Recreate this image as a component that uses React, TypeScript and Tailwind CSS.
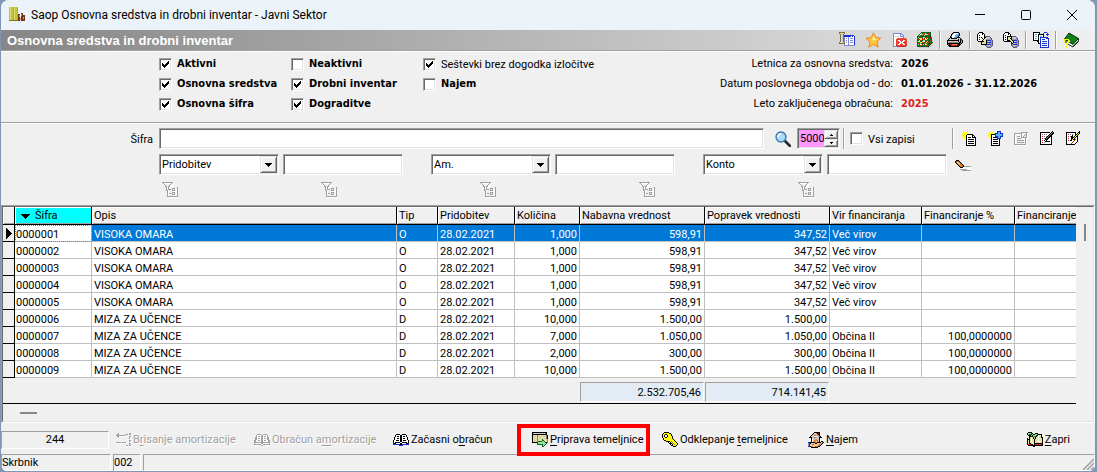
import type { ReactNode } from "react";
import clsx from "clsx";

const sunken =
  "border border-t-[#a0a0a0] border-l-[#a0a0a0] border-r-white border-b-white shadow-[inset_1px_1px_0_#696969,inset_-1px_-1px_0_#e3e3e3]";
const raised =
  "bg-[#f0f0f0] border border-t-[#e3e3e3] border-l-[#e3e3e3] border-r-[#696969] border-b-[#696969] shadow-[inset_1px_1px_0_#fff,inset_-1px_-1px_0_#a0a0a0]";
const panel = "border border-t-[#a0a0a0] border-l-[#a0a0a0] border-r-white border-b-white";
const boldText = "font-['DejaVu_Sans_Condensed','Noto_Sans',sans-serif] font-bold";

const palette: Record<string, string> = {
  k: "#000000",
  w: "#ffffff",
  g: "#808080",
  a: "#a0a0a0",
  l: "#c8c8c8",
  y: "#ffff00",
  c: "#e8e0a0",
  o: "#f08020",
  n: "#b07030",
  s: "#f4c890",
  r: "#d02020",
  R: "#e84030",
  b: "#1830d0",
  v: "#8088d8",
  p: "#9494bc",
  q: "#585870",
  t: "#58b8e8",
  d: "#086818",
  e: "#108010",
  m: "#90e0a0",
  f: "#7e7040",
};

const Bitmap = ({ rows }: { rows: string[] }) => (
  <svg
    className="h-4 w-4 shrink-0"
    viewBox="0 0 16 16"
    shapeRendering="crispEdges"
    aria-hidden="true"
  >
    {rows.map((row, y) =>
      [...row].map((ch, x) =>
        palette[ch] ? (
          <rect key={`${x}-${y}`} x={x} y={y} width="1" height="1" fill={palette[ch]} />
        ) : null
      )
    )}
  </svg>
);

const Drawing = ({ children }: { children: ReactNode }) => (
  <svg className="h-4 w-4 shrink-0" viewBox="0 0 16 16" fill="none" aria-hidden="true">
    {children}
  </svg>
);

const bitmaps = {
  panelWindow: [
    "ffffff..........",
    "fccclf..........",
    ".fclf...........",
    ".fclfbbbbbbbbbb.",
    ".fclfbbbbbbbwbwb",
    ".fclfvwwwvwwwwwb",
    ".fclfvwvwvwvvvwb",
    ".fclfvwwwvwwwwwb",
    ".fclfvwvwvwvvvwb",
    ".fclfvwwwvwwwwwb",
    "fccclfwvwvwvvvwb",
    "ffffffwwwvwwwwwb",
    ".....vwwwvwwwwwb",
    ".....vvvvvvvvvvv",
  ],
  closeDoc: [
    "................",
    "..vvvvvvvvv.....",
    "..vwwwwwwvlv....",
    "..vwwwwwwvwlv...",
    "..vwllllwvvvv...",
    "..vwwwwwwwwwv...",
    "..vwwwRRRRRRRRR.",
    "..vwwRRRRRRRRRRR",
    "..vwwRRwwRRRwwRR",
    "..vwwRRRwwRwwRRR",
    "..vwwRRRRwwwRRRR",
    "..vwwRRRwwRwwRRR",
    "..vwwRRwwRRRwwRR",
    "..vwwrRRRRRRRRRr",
    "..vvvvrrrrrrrrr.",
  ],
  cube: [
    "....dddddddddd..",
    "...dmerrmeerrd..",
    "..dwmmrrwmmrdd..",
    ".dmeerrmeerdrd..",
    "ddddddddddddek..",
    "dmdrrdcmdrrddrd.",
    "dewcmrcdwrcdrdd.",
    "drryyrrryyrdedd.",
    "demrddmmrdeddrdl",
    "dcwdrmcwdrmdredl",
    "dedyyrreeyrrdeddl",
    "drrmddrrmdedkrdl",
    "dmdwcrmdwcrdrdll",
    "deerredeerrddll.",
    "dddddddddddkll..",
    "..lllllllllll...",
  ],
  printer: [
    "......kkkkkk....",
    ".....kvwwwwvk...",
    "....kvwwwtttk...",
    "....kwwwtttvk...",
    "...kvwwwttvk....",
    "...kkwwttvkkk...",
    "..klkkkkkklllk..",
    ".klllllllllklkk.",
    "kkkkkkkkkkkklkgk",
    "klllllllllyklkgk",
    "klggggggggglkkgk",
    "kkkkkkkkkkkkkgk.",
    "kgkrrooooorkkk..",
    ".kkkrrrrrrkkk...",
    "..kkkkkkkkkk....",
  ],
  importDb: [
    "..kkkk..........",
    ".kwwwkk.........",
    "kwwwwkwk........",
    "kwkwwwwk........",
    "kwwwwwwkqqqqq...",
    "kwkwkwwkkllllq..",
    "kwwwwkwkcllllpq.",
    "kwkwwckccpppppq.",
    "kwwwwkccckbbbbpq",
    ".kkkkkkccklllppq",
    "....kcccckbbbbpq",
    "....kcccckllpppq",
    "....kkkkkkbbbbpq",
    "........qplllppq",
    ".........qppppq.",
    "..........qqqq..",
  ],
  exportDb: [
    "..kkkk..........",
    ".kwwwkk.........",
    "kwwwwkwk........",
    "kwkwwwwk........",
    "kwwwkkkkkqqqq...",
    "kwkwkccckllllq..",
    "kwwwkcckkllllpq.",
    "kwkwkccckpppppq.",
    "kwwwkkkcckbbbbpq",
    ".kkkkkkkcckllppq",
    "........kckbbbpq",
    "........kkllpppq",
    "........qpbbbbpq",
    "........qplllppq",
    ".........qppppq.",
    "..........qqqq..",
  ],
  copyDocs: [
    "kkkkkkk....bbb..",
    "kwwwwwk...b...b.",
    "kwttwkkkkkk..bbb",
    "kwwwwkwwwwk...b.",
    "kwttwkwttwk.....",
    "kwwwwkwbbbbbbbb.",
    "kwttwkwbwwwwwbbb",
    "kwwwwkwbwbbbwwwb",
    "kkkkkkwbwwwwwwwb",
    "....kkwbwbbbbbwb",
    ".....kwbwwwwwwwb",
    ".....kkbwbbbbbwb",
    ".......bwwwwwwwb",
    ".......bwbbbbbwb",
    ".......bwwwwwwwb",
    ".......bbbbbbbbb",
  ],
  newDoc: [
    "..y...y.........",
    "y..y.y..........",
    ".yyyyy..........",
    "..yyyykkkkkk....",
    "yyyyykwwwwwkk...",
    "..yyykwwwwwkwk..",
    ".y.y.kwkkkwkkkk.",
    "y..y.kwwwwwwwwk.",
    ".....kwkkkkkkwk.",
    ".....kwwwwwwwwk.",
    ".....kwkkkkkkwk.",
    ".....kwwwwwwwwk.",
    ".....kwkkkkkkwk.",
    ".....kwwwwwwwwk.",
    ".....kkkkkkkkkk.",
  ],
  addDoc: [
    "..y...y...bbbb..",
    "y..y.y....bttb..",
    ".yyyyy..bbbttbbb",
    "..yykkkkbttttttb",
    "yyyykwwwbttttttb",
    "..yykwwwbbbttbbb",
    ".y.ykwkkkkbttb..",
    "....kwwwwwbbbb..",
    "....kwkkkkkwk...",
    "....kwwwwwwwk...",
    "....kwkkkkkwk...",
    "....kwwwwwwwk...",
    "....kwkkkkkwk...",
    "....kwwwwwwwk...",
    "....kkkkkkkkk...",
  ],
  disabledDoc: [
    "................",
    "........aaaaaaa.",
    ".aaaaaaaaw...aw.",
    ".awwwwwwaw..aaw.",
    ".aw.....aw.a.aw.",
    ".aw.aaa.awa..aw.",
    ".aw.....aaaaaaw.",
    ".aw.aaaa.wwwaw..",
    ".aw.........aw..",
    ".aw.aaaaaaa.aw..",
    ".aw.........aw..",
    ".aw.aaaaaaa.aw..",
    ".aw.........aw..",
    ".aaaaaaaaaaaaw..",
    "..wwwwwwwwwwww..",
  ],
  editDoc: [
    ".............k..",
    ".kkkkkkkkkk.kgk.",
    ".kwwwwwwwwwkgkk.",
    ".kwrwgwgwwkgkk..",
    ".kwwwwwwwkgkk...",
    ".kwrwgwgkgkkk...",
    ".kwwwwwkgkkwk...",
    ".kwrwgkgkkwwk...",
    ".kwwwwkkkwwwk...",
    ".kwrwkwkwwwwk...",
    ".kwwwwkkkkkwk...",
    ".kwrwgwwwwwwk...",
    ".kwwwwwwwwwwk...",
    ".kkkkkkkkkkkk...",
  ],
  checkDoc: [
    "..............k.",
    ".kkkkkkkkkk..kk.",
    ".kwwwwwwwwk.kyk.",
    ".kwrwgwgwwkkyk..",
    ".kwwwwwkwwkyk...",
    ".kwrwgkkwkykk...",
    ".kwwwwkkkykwk...",
    ".kwrwwkkykwwk...",
    ".kwwwwkykkrwk...",
    ".kwrwkkwwrwwk...",
    ".kwwwwwwrwwwk...",
    ".kwwwwwrwwwk....",
    ".kwwwwrwwwk.....",
    ".kkkkkkkkk......",
  ],
  deleteRows: [
    "................",
    "...a..........aa",
    "..aaw.....aaa.aa",
    ".aaaaaaaaa......",
    "..aawwwwww....aa",
    "...aw.........aw",
    "..............aw",
    "................",
    "..............aa",
    "..............aw",
    ".aaaaa.aaaa.....",
    "..wwww..www...aa",
    "..............aw",
    "...........aa.aa",
    "...........ww.ww",
  ],
  bookOff: [
    "................",
    "................",
    "...aaaa..aaaa...",
    "..awwwwaawwwwa..",
    "..awaawaawaawa..",
    ".aawwwwaawwwwaa.",
    ".aawaawaawaawaa.",
    ".aawwwwaawwwwaa.",
    "aawwaawaawaawwaa",
    "aawwwwwaawwwwwaa",
    "aaaaaaaaaaaaaaaa",
    "awwwwwwaawwwwwwa",
    "aaaaaaawwaaaaaaa",
    ".wwwww.aaw.wwwww",
  ],
  book: [
    "................",
    "................",
    "...kkkk..kkkk...",
    "..kwwwwkkwwwwk..",
    "..kwkkwkkwkkwk..",
    ".kwwwwwkkwwwwwk.",
    ".kwwkkwkkwkkwwk.",
    ".kwwwwwkkwwwwwk.",
    "kwwkkkwkkwkkkwwk",
    "kwwwwwwkkwwwwwwk",
    "kwkkkkkwwkkkkkwk",
    "bkkwwwwkkwwwwkkb",
    "bbbbbbbkkbbbbbbb",
    "......bbbb......",
  ],
  journal: [
    "kkkkkkkkkkkkkkk.",
    "kllllllllllllgk.",
    "kkkkkkkkkkkkkkk.",
    "kccccgccccccccgk",
    "kcllcgclllclllgk",
    "kccccgccccccccgk",
    "kcllcgclllclllgk",
    "kccccgccccdccccg",
    "kcllcgccccddcccg",
    "kccccgddddmmdccg",
    "kkkkkdmmmmmmmdkg",
    ".....dmmmmmmmmd.",
    ".....ddddddmmd..",
    "..........dmd...",
    "..........dd....",
  ],
  key: [
    "..kkkkk.........",
    ".kyyyyykk.......",
    "kyykkyyyyk......",
    "kykwwkyyyk......",
    "kykwwkyyyyk.....",
    "kyykkyyyyyk.....",
    ".kyyyyyyyyk.....",
    ".kyyyyyyyyyk....",
    "..kkyyyyyyyyk...",
    "....kkkkyfyyyk..",
    "......kykyfyyyk.",
    ".......kkkyfyyyk",
    "........kykyfyyk",
    ".........kkyyyk.",
    "...........kkk..",
  ],
  house: [
    "......kkkkkk....",
    ".....kllnkrk....",
    "....kllllnkk....",
    "...kllnnllnk....",
    "..klllwwlllnk...",
    ".kkkllnnlllkkk..",
    "...klllllllk....",
    "...kwllooslk....",
    "...kwlooonlk....",
    "...kwloosnlk.kk.",
    "bbkkkkkookkkksnk",
    "vbksssskkssssnk.",
    "vbssnnsssssnnk..",
    "vbssssssssnnk...",
    "bbknnssnnnkk....",
    "...kkkkkkk......",
  ],
  exit: [
    ".kkkk...........",
    "kmmmek..kkk.....",
    "kmeekmkkmmekkkk.",
    ".kkk.kmmmekwcck.",
    "..kkkkmeekcwcck.",
    "..kcwckmkccwcckk",
    "k.kcwckmkccwccck",
    "kkkcwcckcccwccck",
    "kckcwcckcccwccck",
    "kckcwcckcccwccck",
    "kckccwckccccwcck",
    "kckkccckkkkkkkkk",
    "krrrkkckrrrrrrrk",
    ".kkkkkkkkkkkkkkk",
    "......kk........",
  ],
  eraser: [
    "................",
    ".kkk............",
    "knnnk...........",
    "knssnk..........",
    ".knssnk.........",
    "..knsonk........",
    "...knoonk.......",
    "....knonkaaaaaaa",
    ".....kkkwwwwwwww",
    "......wwwwwwwwww",
    ".....aaaaaaawwww",
    ".......aaaaaaaaa",
  ],
};

const StarIcon = () => (
  <Drawing>
    <path
      d="M8.500 .8l2.200 4.800 5 .5-3.700 3.600 1.200 5.400-4.700-2.700-4.700 2.800L5 9.900 1 6.300l5.300-.7z"
      fill="#ffc83a"
      stroke="#e8862a"
    />
    <path d="M8.500 3.500l1.200 3 3 .4-5.500 1.700z" fill="#fff0a8" />
  </Drawing>
);

const SearchIcon = () => (
  <Drawing>
    <path d="M10 10l5 5" stroke="#202838" strokeWidth="2.600" strokeLinecap="round" />
    <circle cx="6" cy="6" r="5" fill="#a8dcf8" stroke="#3c78b0" strokeWidth="1.400" />
    <path d="M3 6a3 3 0 0 1 3-3" stroke="#fff" strokeWidth="1.600" />
  </Drawing>
);

const HelpBookIcon = () => (
  <Drawing>
    <path d="M15.500 7v2.500L10 15l-7-4V8z" fill="#fff" stroke="#102010" />
    <path d="M6 1l9.500 5.500-5.500 6L1.500 7z" fill="#108018" stroke="#063008" />
    <path d="M10 14l5.500-5.500" stroke="#707070" />
    <path
      d="M1 7h5v1H1zM0 8h2v2H0zM5 8h2v2H5zM4 10h2v1H4zM3 11h2v2H3zM3 14h2v2H3z"
      fill="#ffff00"
      shapeRendering="crispEdges"
    />
  </Drawing>
);

const FilterIcon = () => (
  <svg
    className="h-4 w-4"
    viewBox="0 0 16 16"
    fill="none"
    shapeRendering="crispEdges"
    aria-hidden="true"
  >
    <path
      d="M1 1.500h10M2 2.500l4 4v5M11 2.500l-4 4M6.500 6v9.500h10M11.500 7.500h3v2h-3zM11.500 11.500h3v2h-3z"
      stroke="#fff"
    />
    <path
      d="M0 .5h11M1 1l3.500 4v4M10 1l-3.500 4v3M5.500 8v6.500h10V5M7 7.500h2M7 11.500h2M10.500 6.500h2v2h-2zM10.500 10.500h2v2h-2z"
      stroke="#a0a0a0"
    />
  </svg>
);

const AppIcon = () => (
  <svg className="h-4 w-4" viewBox="0 0 16 16" shapeRendering="crispEdges" aria-hidden="true">
    <path d="M0 0h9v14H0z" fill="#c4c43c" />
    <path d="M1 0h1v14H1zM5 0h1v14H5z" fill="#dcdc70" />
    <path d="M4 0h1v14H4zM8 1h1v13H8z" fill="#acac38" />
    <path d="M0 13h9v1H0z" fill="#77772a" />
    <path d="M9 7h2v7H9zM12 6h2v8h-2zM14 8h2v6h-2z" fill="#70341c" />
    <path d="M10 8h1v2h-1zM12 7h1v2h-1zM14 10h1v2h-1zM11 11h1v2h-1z" fill="#f09050" />
  </svg>
);

interface CheckProps {
  label: string;
  checked?: boolean;
  bold?: boolean;
}

const Check = ({ label, checked = false, bold = false }: CheckProps) => (
  <label className={clsx("flex h-5 items-center gap-[5px] whitespace-nowrap", bold && boldText)}>
    <span className="relative h-[13px] w-[13px] shrink-0">
      <input
        type="checkbox"
        defaultChecked={checked}
        className={`peer block h-[13px] w-[13px] appearance-none bg-white ${sunken}`}
      />
      <svg
        className="pointer-events-none absolute inset-0 hidden peer-checked:block"
        viewBox="0 0 13 13"
        shapeRendering="crispEdges"
        aria-hidden="true"
      >
        <path
          d="M3 5h1v3H3zM4 6h1v3H4zM5 7h1v3H5zM6 6h1v3H6zM7 5h1v3H7zM8 4h1v3H8zM9 3h1v3H9z"
          fill="#000"
        />
      </svg>
    </span>
    <span className={clsx(!bold && "pt-[2px]")}>{label}</span>
  </label>
);

const Combo = ({ label, options }: { label: string; options: string[] }) => (
  <div className="relative h-[21px] w-[120px]">
    <select
      aria-label={label}
      className={`block h-full w-full appearance-none bg-white pr-5 pl-[2px] leading-4 ${sunken}`}
    >
      {options.map((option) => (
        <option key={option}>{option}</option>
      ))}
    </select>
    <span
      className={`pointer-events-none absolute top-[2px] right-[2px] flex h-[17px] w-[17px] items-center justify-center ${raised}`}
    >
      <svg width="7" height="4" viewBox="0 0 7 4" shapeRendering="crispEdges" aria-hidden="true">
        <path d="M0 0h7v1H0zM1 1h5v1H1zM2 2h3v1H2zM3 3h1v1H3z" />
      </svg>
    </span>
  </div>
);

const Separator = () => (
  <span className="mx-1.5 h-[18px] w-[2px] border-r border-l border-r-white border-l-[#a0a0a0]" />
);

const IconButton = ({ label, children }: { label: string; children: ReactNode }) => (
  <button type="button" aria-label={label} className="block h-4 w-4">
    {children}
  </button>
);

const filters = ["Pridobitev", "Am.", "Konto"];

const columns = [
  { title: "Opis", width: "w-[305px]" },
  { title: "Tip", width: "w-[41px]" },
  { title: "Pridobitev", width: "w-[77px]" },
  { title: "Količina", width: "w-[65px]", numeric: true },
  { title: "Nabavna vrednost", width: "w-[125px]", numeric: true },
  { title: "Popravek vrednosti", width: "w-[125px]", numeric: true },
  { title: "Vir financiranja", width: "w-[92px]" },
  { title: "Financiranje %", width: "w-[93px]", numeric: true },
];

const rows = [
  ["0000001", "VISOKA OMARA", "O", "28.02.2021", "1,000", "598,91", "347,52", "Več virov", ""],
  ["0000002", "VISOKA OMARA", "O", "28.02.2021", "1,000", "598,91", "347,52", "Več virov", ""],
  ["0000003", "VISOKA OMARA", "O", "28.02.2021", "1,000", "598,91", "347,52", "Več virov", ""],
  ["0000004", "VISOKA OMARA", "O", "28.02.2021", "1,000", "598,91", "347,52", "Več virov", ""],
  ["0000005", "VISOKA OMARA", "O", "28.02.2021", "1,000", "598,91", "347,52", "Več virov", ""],
  ["0000006", "MIZA ZA UČENCE", "D", "28.02.2021", "10,000", "1.500,00", "1.500,00", "", ""],
  ["0000007", "MIZA ZA UČENCE", "D", "28.02.2021", "7,000", "1.050,00", "1.050,00", "Občina II", "100,0000000"],
  ["0000008", "MIZA ZA UČENCE", "D", "28.02.2021", "2,000", "300,00", "300,00", "Občina II", "100,0000000"],
  ["0000009", "MIZA ZA UČENCE", "D", "28.02.2021", "10,000", "1.500,00", "1.500,00", "Občina II", "100,0000000"],
];

const headCell =
  "h-[18px] overflow-hidden border-r border-b border-black p-0 pt-px pl-[2px] text-left leading-4 font-normal whitespace-nowrap shadow-[inset_1px_1px_0_#fff,inset_0_-1px_0_#a0a0a0]";
const markCell = "h-[17px] border-r border-b border-black bg-[#f0f0f0] p-0";
const bodyCell = "h-[17px] border-b border-[#c0c0c0] p-0 pt-[3px] leading-[13px] whitespace-nowrap";

const AssetTable = () => (
  <table className="w-full table-fixed border-separate border-spacing-0">
    <colgroup>
      <col className="w-[12px]" />
      <col className="w-[77px]" />
      {columns.map((column) => (
        <col key={column.title} className={column.width} />
      ))}
      <col />
    </colgroup>
    <thead>
      <tr>
        <th className={headCell} />
        <th className={`${headCell} bg-[#00ffff]`}>
          <span className="flex items-center gap-[5px] pl-1">
            <svg width="9" height="5" viewBox="0 0 9 5" shapeRendering="crispEdges" aria-hidden="true">
              <path d="M0 0h9v1H0zM1 1h7v1H1zM2 2h5v1H2zM3 3h3v1H3zM4 4h1v1H4z" />
            </svg>
            Šifra
          </span>
        </th>
        {columns.map((column) => (
          <th key={column.title} className={headCell}>
            {column.title}
          </th>
        ))}
        <th className={`${headCell} border-r-0`}>Financiranje</th>
      </tr>
    </thead>
    <tbody>
      {rows.map(([code, ...cells], index) => {
        const selected = index === 0;
        const tone = selected ? "bg-[#0078d7] text-white" : "bg-white";
        return (
          <tr key={code}>
            <td className={markCell}>
              {selected && (
                <svg
                  className="ml-[3px]"
                  width="6"
                  height="11"
                  viewBox="0 0 6 11"
                  shapeRendering="crispEdges"
                  aria-hidden="true"
                >
                  <path d="M0 0l6 5.500L0 11z" />
                </svg>
              )}
            </td>
            <td
              className={clsx(
                bodyCell,
                "border-r bg-white pl-px",
                selected && "outline-1 -outline-offset-1 outline-[#d07020] outline-dotted"
              )}
            >
              {code}
            </td>
            {cells.map((cell, i) => (
              <td
                key={columns[i].title}
                className={clsx(
                  bodyCell,
                  "overflow-hidden border-r px-[2px]",
                  tone,
                  columns[i].numeric && "text-right"
                )}
              >
                {cell}
              </td>
            ))}
            <td className={clsx(bodyCell, tone)} />
          </tr>
        );
      })}
    </tbody>
    <tfoot>
      <tr>
        <td colSpan={6} className="h-[26px] border-b border-black p-0" />
        {["2.532.705,46", "714.141,45"].map((total) => (
          <td key={total} className="h-[26px] border-b border-black p-0 pr-px pb-px align-bottom">
            <div className={`h-5 bg-[#e3ecf5] pr-[2px] text-right leading-5 ${panel}`}>{total}</div>
          </td>
        ))}
        <td colSpan={3} className="h-[26px] border-b border-black p-0" />
      </tr>
    </tfoot>
  </table>
);

interface ActionProps {
  icon: string[];
  text: [string, string, string];
  width?: string;
  disabled?: boolean;
  marked?: boolean;
}

const actions: ActionProps[] = [
  { icon: bitmaps.deleteRows, text: ["B", "r", "isanje amortizacije"], width: "w-[139px]", disabled: true },
  { icon: bitmaps.bookOff, text: ["Obračun a", "m", "ortizacije"], width: "w-[139px]", disabled: true },
  { icon: bitmaps.book, text: ["Začasni o", "b", "račun"], width: "w-[139px]" },
  { icon: bitmaps.journal, text: ["", "P", "riprava temeljnice"], width: "w-[130px]", marked: true },
  { icon: bitmaps.key, text: ["Odklepanje ", "t", "emeljnice"], width: "w-[146px]" },
  { icon: bitmaps.house, text: ["", "N", "ajem"] },
];

const Action = ({ icon, text, width, disabled, marked }: ActionProps) => (
  <button
    type="button"
    disabled={disabled}
    className={clsx(
      "relative flex h-4 shrink-0 items-center gap-[2px] whitespace-nowrap",
      width,
      disabled && "text-[#a0a0a0] [text-shadow:1px_1px_0_#fff]"
    )}
  >
    <Bitmap rows={icon} />
    <span>
      {text[0]}
      <u className="underline-offset-2">{text[1]}</u>
      {text[2]}
    </span>
    {marked && <span className="absolute -inset-y-2 right-3 -left-[15px] border-4 border-[#ff0000]" />}
  </button>
);

const App = () => (
  <div className="min-h-screen bg-[#8096b4] pr-[2px] pb-px pl-px font-[Roboto,sans-serif] text-[11px] leading-4 text-black">
    <main className="overflow-hidden rounded-t-lg rounded-b-md bg-[#f0f0f0]">
      <header className="flex h-[30px] items-center bg-[#ebf3f8] pl-2">
        <AppIcon />
        <h1 className="ml-1.5 text-[12px]">Saop Osnovna sredstva in drobni inventar - Javni Sektor</h1>
        <div className="ml-auto flex">
          <button type="button" aria-label="Minimiraj" className="flex h-[30px] w-[46px] items-center justify-center">
            <svg width="10" height="10" viewBox="0 0 10 10" aria-hidden="true">
              <path d="M0 4h10v1H0z" />
            </svg>
          </button>
          <button type="button" aria-label="Maksimiraj" className="flex h-[30px] w-[46px] items-center justify-center">
            <svg width="10" height="10" viewBox="0 0 10 10" fill="none" aria-hidden="true">
              <rect x=".5" y=".5" width="9" height="9" rx="1" stroke="#000" />
            </svg>
          </button>
          <button type="button" aria-label="Zapri okno" className="flex h-[30px] w-[46px] items-center justify-center">
            <svg width="10" height="10" viewBox="0 0 10 10" fill="none" aria-hidden="true">
              <path d="M0 0l10 10M10 0L0 10" stroke="#000" />
            </svg>
          </button>
        </div>
      </header>

      <div className="flex h-[21px] items-center border-b border-[#a0a0a0] bg-linear-to-r from-[#868686] to-[#f0f0f0] pr-4 pl-1.5">
        <h2 className="pt-px font-['Liberation_Sans',sans-serif] text-[13px] font-bold text-white">
          Osnovna sredstva in drobni inventar
        </h2>
        <div className="ml-auto flex items-center">
          <div className="flex gap-[10px]">
            <IconButton label="Nastavitve">
              <Bitmap rows={bitmaps.panelWindow} />
            </IconButton>
            <IconButton label="Priljubljeno">
              <StarIcon />
            </IconButton>
            <IconButton label="Zapri dokument">
              <Bitmap rows={bitmaps.closeDoc} />
            </IconButton>
            <IconButton label="Kocka">
              <Bitmap rows={bitmaps.cube} />
            </IconButton>
          </div>
          <Separator />
          <IconButton label="Tiskanje">
            <Bitmap rows={bitmaps.printer} />
          </IconButton>
          <Separator />
          <div className="flex gap-[10px]">
            <IconButton label="Uvoz">
              <Bitmap rows={bitmaps.importDb} />
            </IconButton>
            <IconButton label="Izvoz">
              <Bitmap rows={bitmaps.exportDb} />
            </IconButton>
          </div>
          <Separator />
          <IconButton label="Kopiranje">
            <Bitmap rows={bitmaps.copyDocs} />
          </IconButton>
          <Separator />
          <IconButton label="Pomoč">
            <HelpBookIcon />
          </IconButton>
        </div>
      </div>

      <section className="flex border-t border-b border-t-white border-b-[#a0a0a0] pt-[2px] pb-2 pl-[158px]">
        <div className="w-[132px]">
          <Check label="Aktivni" checked bold />
          <Check label="Osnovna sredstva" checked bold />
          <Check label="Osnovna šifra" checked bold />
        </div>
        <div className="w-[132px]">
          <Check label="Neaktivni" bold />
          <Check label="Drobni inventar" checked bold />
          <Check label="Dograditve" checked bold />
        </div>
        <div>
          <Check label="Seštevki brez dogodka izločitve" checked />
          <Check label="Najem" bold />
        </div>
        <dl className="ml-auto grid grid-cols-[auto_194px] gap-x-2 text-right leading-5 whitespace-nowrap">
          <dt>Letnica za osnovna sredstva:</dt>
          <dd className={`text-left ${boldText}`}>2026</dd>
          <dt>Datum poslovnega obdobja od - do:</dt>
          <dd className={`text-left ${boldText}`}>01.01.2026 - 31.12.2026</dd>
          <dt>Leto zaključenega obračuna:</dt>
          <dd className={`text-left text-[#e02020] ${boldText}`}>2025</dd>
        </dl>
      </section>

      <section className="border-t border-white pt-1 pb-[7px]">
        <div className="flex h-[21px] items-center pr-[14px]">
          <label htmlFor="sifra" className="w-[158px] pt-[2px] pr-1.5 text-right">
            Šifra
          </label>
          <input id="sifra" type="text" className={`h-[21px] min-w-0 flex-1 bg-white px-[2px] ${sunken}`} />
          <button type="button" aria-label="Išči" className="mr-1.5 ml-[11px]">
            <SearchIcon />
          </button>
          <div className="relative h-[21px] w-[43px]">
            <input
              type="text"
              inputMode="numeric"
              aria-label="Število zapisov"
              defaultValue="5000"
              className={`block h-full w-full bg-[#ff99ff] pl-[2px] ${sunken}`}
            />
            <div className="absolute top-[2px] right-[2px] flex w-[14px] flex-col">
              <button type="button" aria-label="Povečaj" className={`flex h-[9px] items-center justify-center ${raised}`}>
                <svg width="3" height="2" viewBox="0 0 3 2" shapeRendering="crispEdges" aria-hidden="true">
                  <path d="M1 0h1v1H1zM0 1h3v1H0z" />
                </svg>
              </button>
              <button type="button" aria-label="Zmanjšaj" className={`flex h-2 items-center justify-center ${raised}`}>
                <svg width="3" height="2" viewBox="0 0 3 2" shapeRendering="crispEdges" aria-hidden="true">
                  <path d="M0 0h3v1H0zM1 1h1v1H1z" />
                </svg>
              </button>
            </div>
          </div>
          <span className="mr-[5px] ml-[3px] h-[21px] w-[2px] border-r border-l border-r-white border-l-[#a0a0a0]" />
          <div className="w-[102px]">
            <Check label="Vsi zapisi" />
          </div>
          <span className="mr-[7px] h-[21px] w-[2px] border-r border-l border-r-white border-l-[#a0a0a0]" />
          <div className="flex gap-[10px]">
            <IconButton label="Nov zapis">
              <Bitmap rows={bitmaps.newDoc} />
            </IconButton>
            <IconButton label="Dodaj zapis">
              <Bitmap rows={bitmaps.addDoc} />
            </IconButton>
            <IconButton label="Kopiraj zapis">
              <Bitmap rows={bitmaps.disabledDoc} />
            </IconButton>
            <IconButton label="Uredi zapis">
              <Bitmap rows={bitmaps.editDoc} />
            </IconButton>
            <IconButton label="Briši zapis">
              <Bitmap rows={bitmaps.checkDoc} />
            </IconButton>
          </div>
        </div>
        <div className="mt-[5px] flex items-end gap-2 pl-[158px]">
          <div className="flex gap-7">
            {filters.map((filter) => (
              <div key={filter} className="flex gap-1">
                <Combo label={`Polje ${filter}`} options={[filter]} />
                <input
                  type="text"
                  aria-label={filter}
                  className={`h-[21px] w-[120px] bg-white px-[2px] ${sunken}`}
                />
              </div>
            ))}
          </div>
          <IconButton label="Počisti">
            <Bitmap rows={bitmaps.eraser} />
          </IconButton>
        </div>
        <div className="mt-[7px] flex gap-[143px] pl-[161px]">
          {[1, 2, 3, 4, 5].map((n) => (
            <IconButton key={n} label={`Filter ${n}`}>
              <FilterIcon />
            </IconButton>
          ))}
        </div>
      </section>

      <section className={panel}>
        <div className="border border-t-[#696969] border-r-[#e3e3e3] border-b-[#e3e3e3] border-l-[#696969]">
          <div className="flex">
            <div className="min-w-0 flex-1">
              <AssetTable />
            </div>
            <div className="w-[17px] pt-[17px] pl-2">
              <div className="h-[17px] w-[2px] bg-[#868686]" />
            </div>
          </div>
          <div className="h-[17px] pt-2 pl-[17px]">
            <div className="h-[2px] w-[17px] bg-[#868686]" />
          </div>
        </div>
      </section>

      <section className="flex items-center pt-2 pr-[25px] pb-[5px]">
        <output className={`mr-1.5 h-[18px] w-[108px] shrink-0 text-center ${panel}`}>244</output>
        {actions.map((action) => (
          <Action key={action.text.join("")} {...action} />
        ))}
        <div className="ml-auto">
          <Action icon={bitmaps.exit} text={["", "Z", "apri"]} />
        </div>
      </section>

      <footer className="flex h-[17px] gap-[2px]">
        <span className={`w-[110px] ${panel}`}>Skrbnik</span>
        <span className={`w-[28px] ${panel}`}>002</span>
        <span className={`flex flex-1 items-end justify-end ${panel}`}>
          <svg width="12" height="12" viewBox="0 0 12 12" fill="none" aria-hidden="true">
            <path d="M1 12L12 1M5 12l7-7M9 12l3-3" stroke="#a0a0a0" strokeWidth="1.500" />
          </svg>
        </span>
      </footer>
    </main>
  </div>
);

export default App;
